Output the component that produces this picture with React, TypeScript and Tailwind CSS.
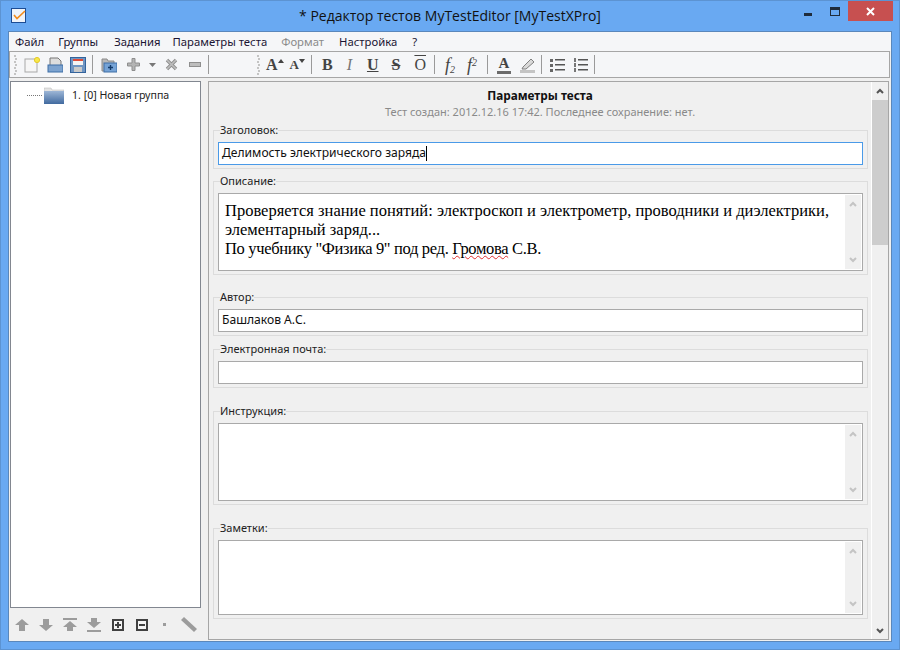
import React from "react";

const Sep = ({ ml }: { ml: string }) => <div className={`h-[19px] w-px bg-[#9a9a9a] ${ml}`} />;

const Grip = () => (
  <div className="flex h-[20px] w-[3px] flex-col justify-between">
    {[0, 1, 2, 3, 4, 5, 6].map((i) => (
      <div key={i} className={`h-[2px] w-[2px] bg-[#c4c4c4] ${i % 2 ? "ml-px" : ""}`} />
    ))}
  </div>
);

const Icon = ({ w, h, cls, children }: { w: number; h: number; cls?: string; children: React.ReactNode }) => (
  <svg width={w} height={h} viewBox={`0 0 ${w} ${h}`} className={`shrink-0 ${cls || ""}`}>
    {children}
  </svg>
);

const Fmt = ({ ml, cls, children }: { ml: string; cls: string; children: React.ReactNode }) => (
  <span className={`font-['Liberation_Serif',serif] leading-none text-[#444] ${ml} ${cls}`}>{children}</span>
);

const Arrow = ({ up, bar }: { up?: boolean; bar?: boolean }) => (
  <Icon w={14} h={14}>
    {up ? (
      <>
        {bar && <rect x="0" y="0" width="14" height="2" fill="#9c9c9c" />}
        <path d={bar ? "M7 3 L14 9 L10 9 L10 13 L4 13 L4 9 L0 9 Z" : "M7 1 L14 7 L10 7 L10 13 L4 13 L4 7 L0 7 Z"} fill="#9c9c9c" />
      </>
    ) : (
      <>
        <path d={bar ? "M4 0 L10 0 L10 4 L14 4 L7 10 L0 4 L4 4 Z" : "M4 1 L10 1 L10 7 L14 7 L7 13 L0 7 L4 7 Z"} fill="#9c9c9c" />
        {bar && <rect x="0" y="12" width="14" height="2" fill="#9c9c9c" />}
      </>
    )}
  </Icon>
);

const Box = ({ sign }: { sign: "+" | "-" }) => (
  <Icon w={12} h={12}>
    <rect x="1" y="1" width="10" height="10" fill="#f4f4f4" stroke="#404040" strokeWidth="2" />
    <rect x="3" y="5" width="6" height="2" fill="#404040" />
    {sign === "+" && <rect x="5" y="3" width="2" height="6" fill="#404040" />}
  </Icon>
);

const Chevron = ({ up, color, cls }: { up?: boolean; color: string; cls?: string }) => (
  <Icon w={8} h={6} cls={cls}>
    <path d={up ? "M1 5 L4 2 L7 5" : "M1 1 L4 4 L7 1"} fill="none" stroke={color} strokeWidth="2" />
  </Icon>
);

const Group = ({ label, cls, children }: { label: string; cls: string; children: React.ReactNode }) => (
  <fieldset className={`ml-[4px] mr-[3px] border border-[#dcdcdc] px-[4px] pb-[3px] pt-[5px] ${cls}`}>
    <legend className="ml-[2px] h-[13px] text-[11px] leading-[11px] text-[#222]">{label}</legend>
    {children}
  </fieldset>
);

const Memo = ({ h, children }: { h: string; children?: React.ReactNode }) => (
  <div className={`flex border border-[#a9a9a9] bg-white ${h}`}>
    <div className="flex-1 overflow-hidden pl-[6px] pt-[7px] font-['Liberation_Serif',serif] text-[16.5px] leading-[19px] text-black">
      {children}
    </div>
    <div className="my-px mr-px flex w-[16px] flex-col items-center justify-between bg-[#f0f0f0] py-[6px]">
      <Chevron up color="#c4c4c4" />
      <Chevron color="#c4c4c4" />
    </div>
  </div>
);

const Edit = ({ text, focus }: { text?: string; focus?: boolean }) => (
  <div className={`flex h-[23px] items-center border bg-white pl-[3px] text-[12.1px] text-[#111] ${focus ? "border-[#4a9ae8]" : "border-[#a9a9a9]"}`}>
    {text}
    {focus && <div className="h-[15px] w-px bg-black" />}
  </div>
);

export default function App() {
  return (
    <div className="flex h-[650px] w-[900px] flex-col border border-[#5c93d2] bg-[#69a9f2] font-['Noto_Sans',sans-serif]">
      {/* title bar */}
      <div className="flex h-[30px] shrink-0 items-start">
        <div className="ml-[10px] mt-[7px]">
          <Icon w={15} h={15}>
            <rect x="0.5" y="0.5" width="14" height="14" fill="#eef3fa" stroke="#1d4d94" />
            <path d="M3 7 L6 10.5 L14 3" fill="none" stroke="#f08a1c" strokeWidth="1.6" />
          </Icon>
        </div>
        <div className="mt-[5px] flex-1 pl-[70px] text-center font-['Open_Sans',sans-serif] text-[14px] leading-[20px] text-[#111]">
          * Редактор тестов MyTestEditor [MyTestXPro]
        </div>
        <div className="mt-[12px] h-[3px] w-[8px] bg-[#1f2c3c]" />
        <div className="ml-[18px] mt-[6px] h-[9px] w-[10px] border border-t-[3px] border-[#1f2c3c]" />
        <div className="ml-[8px] flex h-[20px] w-[45px] items-center justify-center bg-[#c75050]">
          <Icon w={9} h={9}>
            <path d="M1 1 L8 8 M8 1 L1 8" stroke="#fff" strokeWidth="2" />
          </Icon>
        </div>
        <div className="w-[6px]" />
      </div>

      {/* client */}
      <div className="mx-[7px] mb-[7px] flex min-h-0 flex-1 flex-col border border-[#5a87bb] bg-[#f0f0f0] text-[11px]">
        {/* menu */}
        <div className="flex h-[19px] shrink-0 items-center bg-[#f5f6f8] pl-[6px] pt-[1px] text-[11.3px] text-[#1a1433]">
          <span>Файл</span>
          <span className="ml-[14px]">Группы</span>
          <span className="ml-[16px]">Задания</span>
          <span className="ml-[12px]">Параметры теста</span>
          <span className="ml-[14px] text-[#8a8a8a]">Формат</span>
          <span className="ml-[15px]">Настройка</span>
          <span className="ml-[15px]">?</span>
        </div>

        {/* toolbar */}
        <div className="ml-0 mr-px flex h-[27px] shrink-0 items-center border border-[#a6a6a6] bg-[#f5f6f8] pl-[4px]">
          <Grip />
          <Icon w={16} h={16} cls="ml-[7px]">
            <rect x="1" y="2" width="12" height="13" fill="#f6f6f6" stroke="#a8a8a8" />
            <circle cx="13" cy="3" r="2.6" fill="#f7e84a" stroke="#e4c92a" />
          </Icon>
          <Icon w={16} h={16} cls="ml-[7px]">
            <path d="M3 1 H11 L14 4 V10 H3 Z" fill="#ddd" stroke="#777" />
            <rect x="1" y="8" width="15" height="7" fill="#7da3cf" stroke="#3f6ea6" />
          </Icon>
          <Icon w={16} h={16} cls="ml-[7px]">
            <rect x="0.5" y="0.5" width="15" height="15" fill="#6f95c3" stroke="#34639b" />
            <rect x="3" y="2" width="10" height="6" fill="#f4f4f4" />
            <rect x="3" y="2" width="10" height="2" fill="#dd4a38" />
            <rect x="4" y="10" width="8" height="5" fill="#c9c9c9" />
          </Icon>
          <Sep ml="ml-[6px]" />
          <Icon w={16} h={16} cls="ml-[8px]">
            <path d="M1 2 H6 L7 4 H13 V14 H1 Z" fill="#b9b9b9" stroke="#8a8a8a" />
            <rect x="3" y="6" width="13" height="9" fill="#76a3d6" stroke="#3f6ea6" />
            <path d="M7 10.5 H12 M9.5 8 V13" stroke="#123a6b" strokeWidth="1.4" />
          </Icon>
          <Icon w={13} h={13} cls="ml-[10px]">
            <path d="M5 0.5 H8 V5 H12.5 V8 H8 V12.5 H5 V8 H0.5 V5 H5 Z" fill="#b4b4b4" stroke="#8e8e8e" />
          </Icon>
          <Icon w={7} h={4} cls="ml-[9px]">
            <path d="M0 0 H7 L3.5 4 Z" fill="#777" />
          </Icon>
          <Icon w={13} h={13} cls="ml-[9px]">
            <path d="M2 2 L11 11 M11 2 L2 11" stroke="#8e8e8e" strokeWidth="3.4" />
            <path d="M2 2 L11 11 M11 2 L2 11" stroke="#bdbdbd" strokeWidth="1.6" />
          </Icon>
          <Icon w={12} h={5} cls="ml-[11px]">
            <rect x="0.5" y="0.5" width="11" height="4" fill="#bdbdbd" stroke="#8e8e8e" />
          </Icon>
          <Sep ml="ml-[7px]" />
          <div className="ml-[48px]">
            <Grip />
          </div>
          <Fmt ml="ml-[6px]" cls="flex items-start font-bold text-[16px]">
            A<Icon w={6} h={4} cls="mt-[2px]"><path d="M0 4 L3 0 L6 4 Z" fill="#444" /></Icon>
          </Fmt>
          <Fmt ml="ml-[6px]" cls="flex items-start font-bold text-[13px]">
            A<Icon w={6} h={4} cls="mt-[1px]"><path d="M0 0 L6 0 L3 4 Z" fill="#444" /></Icon>
          </Fmt>
          <Sep ml="ml-[6px]" />
          <Fmt ml="ml-[10px]" cls="font-bold text-[16px]">B</Fmt>
          <Fmt ml="ml-[14px]" cls="italic text-[16px] text-[#777]">I</Fmt>
          <Fmt ml="ml-[15px]" cls="font-bold text-[16px] underline">U</Fmt>
          <Fmt ml="ml-[13px]" cls="font-bold text-[16px] line-through">S</Fmt>
          <Fmt ml="ml-[14px]" cls="text-[16px] overline">O</Fmt>
          <Sep ml="ml-[8px]" />
          <Fmt ml="ml-[10px]" cls="italic text-[18px]">
            f<sub className="text-[10px]">2</sub>
          </Fmt>
          <Fmt ml="ml-[12px]" cls="italic text-[18px]">
            f<sup className="text-[10px]">2</sup>
          </Fmt>
          <Sep ml="ml-[10px]" />
          <div className="ml-[9px] flex w-[14px] flex-col items-center">
            <Fmt ml="" cls="font-bold text-[15px]">A</Fmt>
            <div className="h-[3px] w-[14px] bg-[#6b6b6b]" />
          </div>
          <Icon w={15} h={16} cls="ml-[9px]">
            <path d="M3 10 L11 2 L14 5 L6 12 L2 12 Z" fill="#d9d9d9" stroke="#808080" />
            <rect x="0" y="13" width="15" height="3" fill="#c4c4c4" />
          </Icon>
          <Sep ml="ml-[6px]" />
          <Icon w={15} h={14} cls="ml-[8px]">
            {[2, 7, 12].map((y) => (
              <g key={y}>
                <rect x="0" y={y - 1} width="3" height="3" fill="#666" />
                <rect x="5" y={y - 1} width="10" height="1.5" fill="#555" />
              </g>
            ))}
          </Icon>
          <Icon w={15} h={14} cls="ml-[8px]">
            {[2, 7, 12].map((y) => (
              <g key={y}>
                <rect x="1" y={y - 2} width="2" height="4" fill="#777" />
                <rect x="5" y={y - 1} width="10" height="1.5" fill="#555" />
              </g>
            ))}
          </Icon>
          <Sep ml="ml-[6px]" />
        </div>

        {/* main */}
        <div className="flex min-h-0 flex-1">
          {/* left */}
          <div className="ml-[1px] flex w-[191px] shrink-0 flex-col">
            <div className="mt-[3px] h-[527px] border border-[#828790] bg-white">
              <div className="ml-[16px] mt-[5px] flex items-center">
                <div className="w-[15px] border-t border-dotted border-[#777]" />
                <Icon w={20} h={17} cls="ml-[2px]">
                  <defs>
                    <linearGradient id="fold" x1="0" y1="0" x2="0" y2="1">
                      <stop offset="0" stopColor="#9db6d6" />
                      <stop offset="1" stopColor="#416a9f" />
                    </linearGradient>
                  </defs>
                  <path d="M0 1 H7 L8 3 H20 V5 H0 Z" fill="#e4e4e4" stroke="#b5b5b5" strokeWidth="0.5" />
                  <rect x="0" y="4" width="20" height="13" fill="url(#fold)" />
                </Icon>
                <span className="ml-[8px] text-[10.6px] text-[#222]">1. [0] Новая группа</span>
              </div>
            </div>
            <div className="flex flex-1 items-center pl-[5px]">
              <Arrow up />
              <div className="ml-[10px]"><Arrow /></div>
              <div className="ml-[10px]"><Arrow up bar /></div>
              <div className="ml-[10px]"><Arrow bar /></div>
              <div className="ml-[11px]"><Box sign="+" /></div>
              <div className="ml-[12px]"><Box sign="-" /></div>
              <div className="ml-[15px] h-[3px] w-[3px] bg-[#9c9c9c]" />
              <Icon w={16} h={16} cls="ml-[15px]">
                <path d="M3 0 L16 12 L13 15 L0 3 Z" fill="#9c9c9c" />
              </Icon>
            </div>
          </div>

          {/* right */}
          <div className="ml-[7px] mr-[2px] mt-[3px] mb-[1px] flex min-w-0 flex-1 border border-[#a6a6a6] bg-[#f0f0f0]">
            <div className="min-w-0 flex-1">
              <div className="mt-[4px] h-[17px] text-center text-[11.8px] font-bold leading-[18px] text-[#111]">Параметры теста</div>
              <div className="h-[18px] text-center text-[11px] leading-[18px] text-[#8a8a8a]">
                Тест создан: 2012.12.16 17:42. Последнее сохранение: нет.
              </div>
              <Group label="Заголовок:" cls="mt-[3px]">
                <Edit text="Делимость электрического заряда" focus />
              </Group>
              <Group label="Описание:" cls="mt-[6px]">
                <Memo h="h-[78px]">
                  Проверяется знание понятий: электроскоп и электрометр, проводники и диэлектрики,
                  <br />
                  элементарный заряд...
                  <br />
                  <span className="tracking-[-0.33px]">
                    По учебнику "Физика 9" под ред.{" "}
                    <span className="underline decoration-[#e03030] decoration-wavy decoration-1">Громова</span> С.В.
                  </span>
                </Memo>
              </Group>
              <Group label="Автор:" cls="mt-[16px]">
                <Edit text="Башлаков А.С." />
              </Group>
              <Group label="Электронная почта:" cls="mt-[7px]">
                <Edit />
              </Group>
              <Group label="Инструкция:" cls="mt-[17px]">
                <Memo h="h-[78px]" />
              </Group>
              <Group label="Заметки:" cls="mt-[17px]">
                <Memo h="h-[75px]" />
              </Group>
            </div>
            {/* scrollbar */}
            <div className="flex w-[17px] shrink-0 flex-col border-l border-white">
              <div className="flex h-[18px] items-center justify-center">
                <Chevron up color="#555" />
              </div>
              <div className="h-[145px] bg-[#cdcdcd]" />
              <div className="flex-1" />
              <div className="flex h-[16px] items-center justify-center">
                <Chevron color="#555" />
              </div>
            </div>
          </div>
        </div>
      </div>
    </div>
  );
}
